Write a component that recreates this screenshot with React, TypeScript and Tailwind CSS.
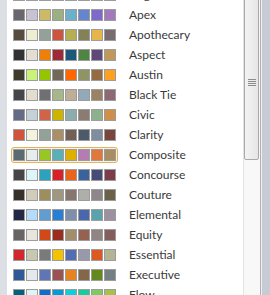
import React from "react";

type Theme = { name: string; colors: string[] };

const themes: Theme[] = [
  { name: "Angles", colors: ["#434342", "#CDD7D9", "#797B7E", "#F8B323", "#656A59", "#46B2B5", "#8CAA7E", "#D36F68"] },
  { name: "Apex", colors: ["#69676D", "#C9C2D1", "#CEB966", "#9CB084", "#6BB1C9", "#6585CF", "#7E6BC9", "#A379BB"] },
  { name: "Apothecary", colors: ["#564B3C", "#ECEDD1", "#93A299", "#CF543F", "#B5AE53", "#848058", "#E8B54D", "#786C71"] },
  { name: "Aspect", colors: ["#323232", "#E3DED1", "#F07F09", "#9F2936", "#1B587C", "#4E8542", "#604878", "#C19859"] },
  { name: "Austin", colors: ["#3E3D2D", "#CAF278", "#94C600", "#71685A", "#FF6700", "#909465", "#956B43", "#FEA022"] },
  { name: "Black Tie", colors: ["#46464A", "#E3DCCF", "#6F6F74", "#A7B789", "#BEAE98", "#92A9B9", "#9C8265", "#8D6974"] },
  { name: "Civic", colors: ["#646B86", "#C5D1D7", "#D16349", "#CCB400", "#8CADAE", "#8C7B70", "#8FB08C", "#D19049"] },
  { name: "Clarity", colors: ["#D2533C", "#F3F2DC", "#93A299", "#AD8F67", "#726056", "#4C5A6A", "#808DA0", "#79463D"] },
  { name: "Composite", colors: ["#5B6973", "#E7ECED", "#98C723", "#59B0B9", "#DEAE00", "#B77BB4", "#E0773C", "#A98D63"] },
  { name: "Concourse", colors: ["#464646", "#DEF5FA", "#2DA2BF", "#DA1F28", "#EB641B", "#39639D", "#474B78", "#7D3C4A"] },
  { name: "Couture", colors: ["#37302A", "#D0CCB9", "#9E8E5C", "#A09781", "#85776D", "#AEAFA9", "#8D878B", "#6B6149"] },
  { name: "Elemental", colors: ["#212745", "#B4DCFA", "#629DD1", "#297FD5", "#7F8FA9", "#4A66AC", "#5AA2AE", "#9D90A0"] },
  { name: "Equity", colors: ["#696464", "#E9E5DC", "#D34817", "#9B2D1F", "#A28E6A", "#956251", "#918485", "#855D5D"] },
  { name: "Essential", colors: ["#D1282E", "#C8C8B1", "#7A7A7A", "#F5C201", "#526DB0", "#989AAC", "#DC5924", "#B4B392"] },
  { name: "Executive", colors: ["#2F5897", "#E4E9EF", "#6076B4", "#9C5252", "#E68422", "#846648", "#63891F", "#758085"] },
  { name: "Flow", colors: ["#04617B", "#DBF5F9", "#0F6FC6", "#009DD9", "#0BD0D9", "#10CF9B", "#7CCA62", "#A5C249"] },
];

function Row({ theme, selected }: { theme: Theme; selected: boolean }) {
  return (
    <div className="flex h-5 shrink-0 items-center pl-[4px]">
      <div
        className={
          selected
            ? "flex gap-px rounded-[3px] border border-[#e2b35e] bg-[#fcf1d9] p-px"
            : "flex gap-px rounded-[3px] border border-transparent p-px"
        }
      >
        {theme.colors.map((c, i) => (
          <div
            key={i}
            className="h-3 w-3 border border-[#9c9c9c]"
            style={{ backgroundColor: c }}
          />
        ))}
      </div>
      <span className="ml-[11px] text-[12px] leading-none text-[#3a3a3a]">{theme.name}</span>
    </div>
  );
}

export default function App() {
  return (
    <div
      className="flex h-[295px] w-[270px] overflow-hidden bg-white"
      style={{ fontFamily: 'Lato, "Noto Sans", sans-serif' }}
    >
      <div className="w-[7px] shrink-0 bg-[#dcdfe4]" />
      <div className="mt-[-15px] flex w-[236px] shrink-0 flex-col">
        {themes.map((t) => (
          <Row key={t.name} theme={t} selected={t.name === "Composite"} />
        ))}
      </div>
      <div className="flex w-[18px] shrink-0 border-l border-[#e4e4e4] bg-[#f8f8f8]">
        <div className="flex w-[16px] flex-col">
          <div className="mt-[-3px] flex h-[163px] w-[15px] shrink-0 flex-col items-center rounded-b-[2px] border border-[#a9a9a9] bg-gradient-to-r from-[#f3f3f3] to-[#e6e6e6] pt-[81px]">
            <div className="flex flex-col gap-px">
              <div className="h-px w-2 bg-[#8c8c8c]" />
              <div className="h-px w-2 bg-[#8c8c8c]" />
              <div className="h-px w-2 bg-[#8c8c8c]" />
              <div className="h-px w-2 bg-[#8c8c8c]" />
            </div>
          </div>
        </div>
        <div className="w-px bg-[#b0b0b0]" />
      </div>
      <div className="w-px shrink-0 bg-[#f0f0f0]" />
      <div className="flex-1 bg-[#c6cbd6]" />
    </div>
  );
}
